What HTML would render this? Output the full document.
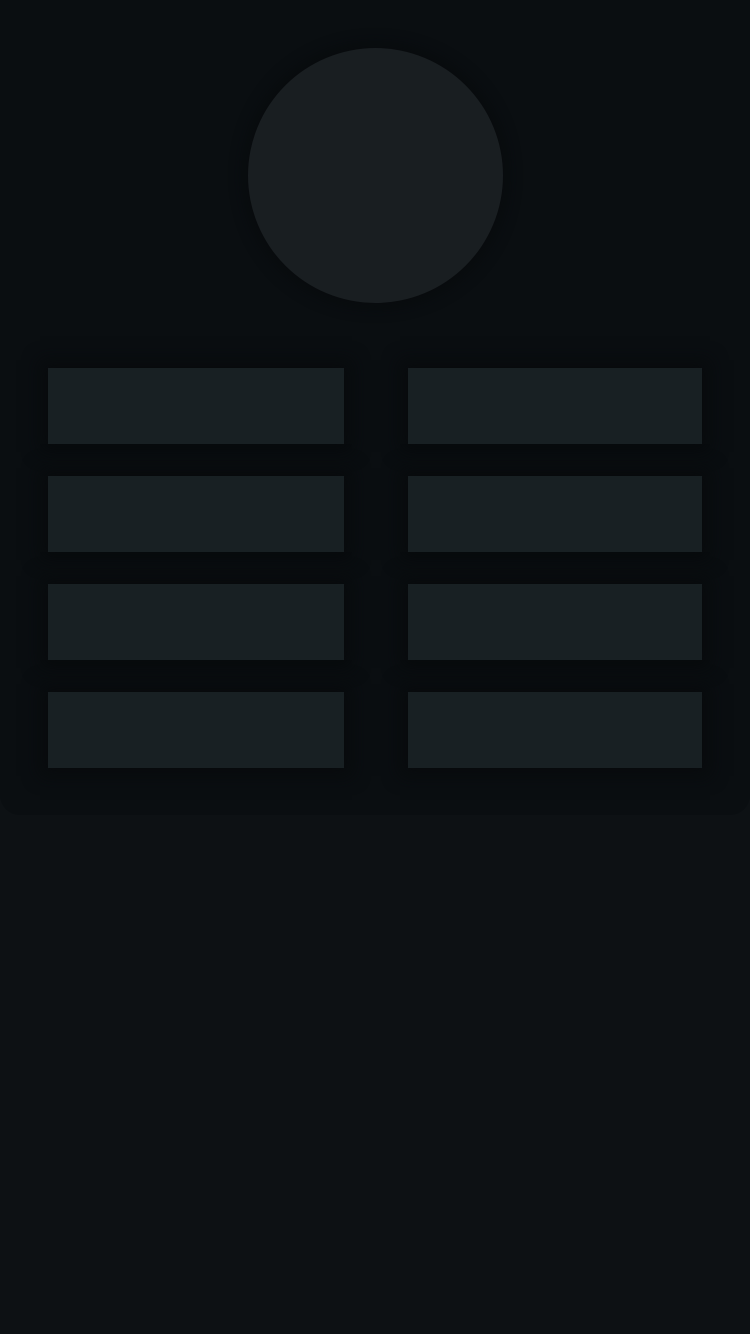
<!DOCTYPE html>
<html><head><meta charset="utf-8"><style>
html,body{margin:0;padding:0;width:750px;height:1334px;background:#0d1114;overflow:hidden}
.card{position:absolute;left:0;top:0;width:750px;height:815px;background:#0a0e11;border-radius:0 0 20px 20px}
.circ{position:absolute;left:248px;top:48px;width:255px;height:255px;border-radius:50%;background:#191e21;box-shadow:0 0 14px 4px #080b0d}
.r{position:absolute;height:76px;background:#182023;box-shadow:0 0 16px 8px #080b0d}
.l{left:48px;width:296px}.rt{left:408px;width:294px}
</style></head><body>
<div class="card"></div>
<div class="circ"></div>
<div class="r l" style="top:368px"></div><div class="r rt" style="top:368px"></div>
<div class="r l" style="top:476px"></div><div class="r rt" style="top:476px"></div>
<div class="r l" style="top:584px"></div><div class="r rt" style="top:584px"></div>
<div class="r l" style="top:692px"></div><div class="r rt" style="top:692px"></div>
</body></html>
